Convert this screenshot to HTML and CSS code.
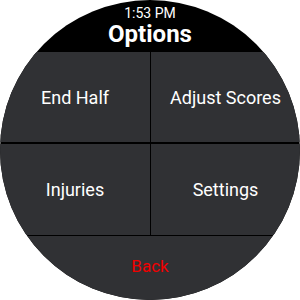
FILE: index.html
```html
<!DOCTYPE html>
<html>
	<head>
		<meta http-equiv="content-type" content="text/html; charset=utf-8" />
		<link rel="stylesheet" href="styles.css">
	</head>
	<body>
		<div class="watch">
			<div class="header">
				<div class="time">1:53 PM</div>
				<div class="title">Options</div>
			</div>
			<div class="grid">
				<div class="cell">End Half</div>
				<div class="cell">Adjust Scores</div>
				<div class="cell">Injuries</div>
				<div class="cell">Settings</div>
			</div>
			<div class="back">Back</div>
		</div>
	</body>
</html>
```

FILE: styles.css
```css
body {
	margin: 0;
	background: #ffffff;
	font-family: Roboto, "Liberation Sans", sans-serif;
}

.watch {
	width: 300px;
	height: 300px;
	border-radius: 50%;
	overflow: hidden;
	background: #000000;
	display: flex;
	flex-direction: column;
}

.header {
	height: 52px;
	color: #ffffff;
	text-align: center;
}

.time {
	font-size: 14px;
	line-height: 14px;
	padding-top: 6px;
}

.title {
	font-size: 24px;
	font-weight: bold;
	line-height: 24px;
	margin-top: 2px;
}

.grid {
	display: grid;
	grid-template-columns: 150px 149px;
	grid-template-rows: 90px 91px;
	column-gap: 1px;
	row-gap: 2px;
}

.cell {
	background: #303134;
	color: #ffffff;
	font-size: 18px;
	display: flex;
	align-items: center;
	justify-content: center;
}

.back {
	flex: 1;
	margin-top: 1px;
	background: #303134;
	color: #f00000;
	font-size: 17px;
	text-align: center;
	padding-top: 20px;
}
```
